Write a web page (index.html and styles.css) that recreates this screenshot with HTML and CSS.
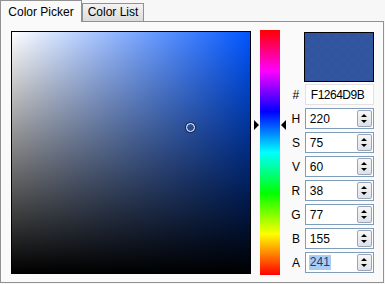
FILE: index.html
```html
<!DOCTYPE html>
<html lang="en">
<head>
    <meta charset="UTF-8">
    <title>Color Picker</title>
    <link rel="stylesheet" href="styles.css">
</head>
<body>
    <div class="tabs">
        <div class="tab active">Color Picker</div>
        <div class="tab">Color List</div>
    </div>
    <div class="panel">
        <div class="sv-box">
            <div class="sv-marker" style="left: 75%; top: 40%;"></div>
        </div>
        <div class="hue-bar">
            <div class="hue-arrow left" style="top: 38.9%;"></div>
            <div class="hue-arrow right" style="top: 38.9%;"></div>
        </div>
        <div class="values">
            <div class="swatch"><div class="swatch-fill"></div></div>
            <div class="row hex-row">
                <span class="label">#</span>
                <div class="field hex">F1264D9B</div>
            </div>
            <div class="row">
                <span class="label">H</span>
                <div class="field"><span class="num">220</span><span class="spin"></span></div>
            </div>
            <div class="row">
                <span class="label">S</span>
                <div class="field"><span class="num">75</span><span class="spin"></span></div>
            </div>
            <div class="row">
                <span class="label">V</span>
                <div class="field"><span class="num">60</span><span class="spin"></span></div>
            </div>
            <div class="row">
                <span class="label">R</span>
                <div class="field"><span class="num">38</span><span class="spin"></span></div>
            </div>
            <div class="row">
                <span class="label">G</span>
                <div class="field"><span class="num">77</span><span class="spin"></span></div>
            </div>
            <div class="row">
                <span class="label">B</span>
                <div class="field"><span class="num">155</span><span class="spin"></span></div>
            </div>
            <div class="row">
                <span class="label">A</span>
                <div class="field"><span class="num selected">241</span><span class="spin"></span></div>
            </div>
        </div>
    </div>
</body>
</html>
```

FILE: styles.css
```css
body {
    margin: 0;
    width: 385px;
    height: 284px;
    background: #f7f7f7;
    font-family: 'Liberation Sans', Arial, sans-serif;
    font-size: 12px;
    color: #000;
    overflow: hidden;
}

.tabs {
    display: flex;
    align-items: flex-end;
    height: 21px;
    position: relative;
    z-index: 1;
}

.tab {
    box-sizing: border-box;
    height: 18px;
    width: 62px;
    border: 1px solid #919191;
    border-bottom: none;
    background: linear-gradient(#f3f3f3, #dcdcdc);
    line-height: 17px;
    text-align: center;
}

.tab.active {
    width: 82px;
    height: 22px;
    margin-bottom: -1px;
    background: #fafafa;
    line-height: 22px;
}

.panel {
    box-sizing: border-box;
    width: 384px;
    height: 262px;
    border: 1px solid #919191;
    background: #fafafa;
    display: flex;
    align-items: flex-start;
    padding: 8px 0 0 10px;
}

.sv-box {
    box-sizing: border-box;
    position: relative;
    width: 240px;
    height: 243px;
    margin-top: 1px;
    border: 1px solid #000;
    background: linear-gradient(to top, #000, rgba(0, 0, 0, 0)),
                linear-gradient(to right, #fff, #0055ff);
}

.sv-marker {
    position: absolute;
    width: 7px;
    height: 7px;
    margin: -5px 0 0 -5px;
    border: 1.5px solid #fff;
    border-radius: 50%;
    box-shadow: 0 0 0 1px #1a2a50;
}

.hue-bar {
    position: relative;
    width: 20px;
    height: 245px;
    margin-left: 9px;
    background: linear-gradient(#ff0000, #ff00ff 16.7%, #0000ff 33.3%, #00ffff 50%,
                #00ff00 66.7%, #ffff00 83.3%, #ff0000);
}

.hue-arrow {
    position: absolute;
    width: 0;
    height: 0;
    margin-top: -5px;
    border-top: 5px solid transparent;
    border-bottom: 5px solid transparent;
}

.hue-arrow.left {
    left: -6px;
    border-left: 5px solid #000;
}

.hue-arrow.right {
    right: -6px;
    border-right: 5px solid #000;
}

.values {
    width: 86px;
    margin: 2px 0 0 8px;
    display: flex;
    flex-direction: column;
    gap: 3px;
}

.swatch {
    box-sizing: border-box;
    width: 70px;
    height: 50px;
    margin: 0 0 -1px 16px;
    border: 1px solid #000;
    background: repeating-conic-gradient(#d0d0d0 0 25%, #fff 0 50%) 0 0 / 10px 10px;
}

.swatch-fill {
    width: 100%;
    height: 100%;
    background: rgba(38, 77, 155, 0.945);
}

.row {
    display: flex;
    align-items: center;
    height: 21px;
}

.label {
    width: 16px;
    text-align: center;
    padding-right: 1px;
}

.field {
    box-sizing: border-box;
    width: 70px;
    height: 21px;
    border: 1px solid #7f9db9;
    background: #fff;
    display: flex;
    align-items: center;
    padding: 0 1px 0 4px;
}

.field.hex {
    border-color: #e2e2e2;
    padding-left: 5px;
    letter-spacing: -0.5px;
}

.num {
    flex: 1;
}

.num.selected {
    flex: none;
    margin-left: -1px;
    padding: 0 1px;
    background: #a8cdf5;
    color: #1a3c7a;
    line-height: 15px;
    margin-right: auto;
}

.spin {
    box-sizing: border-box;
    position: relative;
    width: 15px;
    height: 17px;
    border: 1px solid #9aa6b8;
    border-radius: 2px;
    background: linear-gradient(#f6f6f6, #dde1e8);
}

.spin::before,
.spin::after {
    content: '';
    position: absolute;
    left: 3px;
    border-left: 3.5px solid transparent;
    border-right: 3.5px solid transparent;
}

.spin::before {
    top: 3px;
    border-bottom: 3px solid #000;
}

.spin::after {
    bottom: 3px;
    border-top: 3px solid #000;
}
```
